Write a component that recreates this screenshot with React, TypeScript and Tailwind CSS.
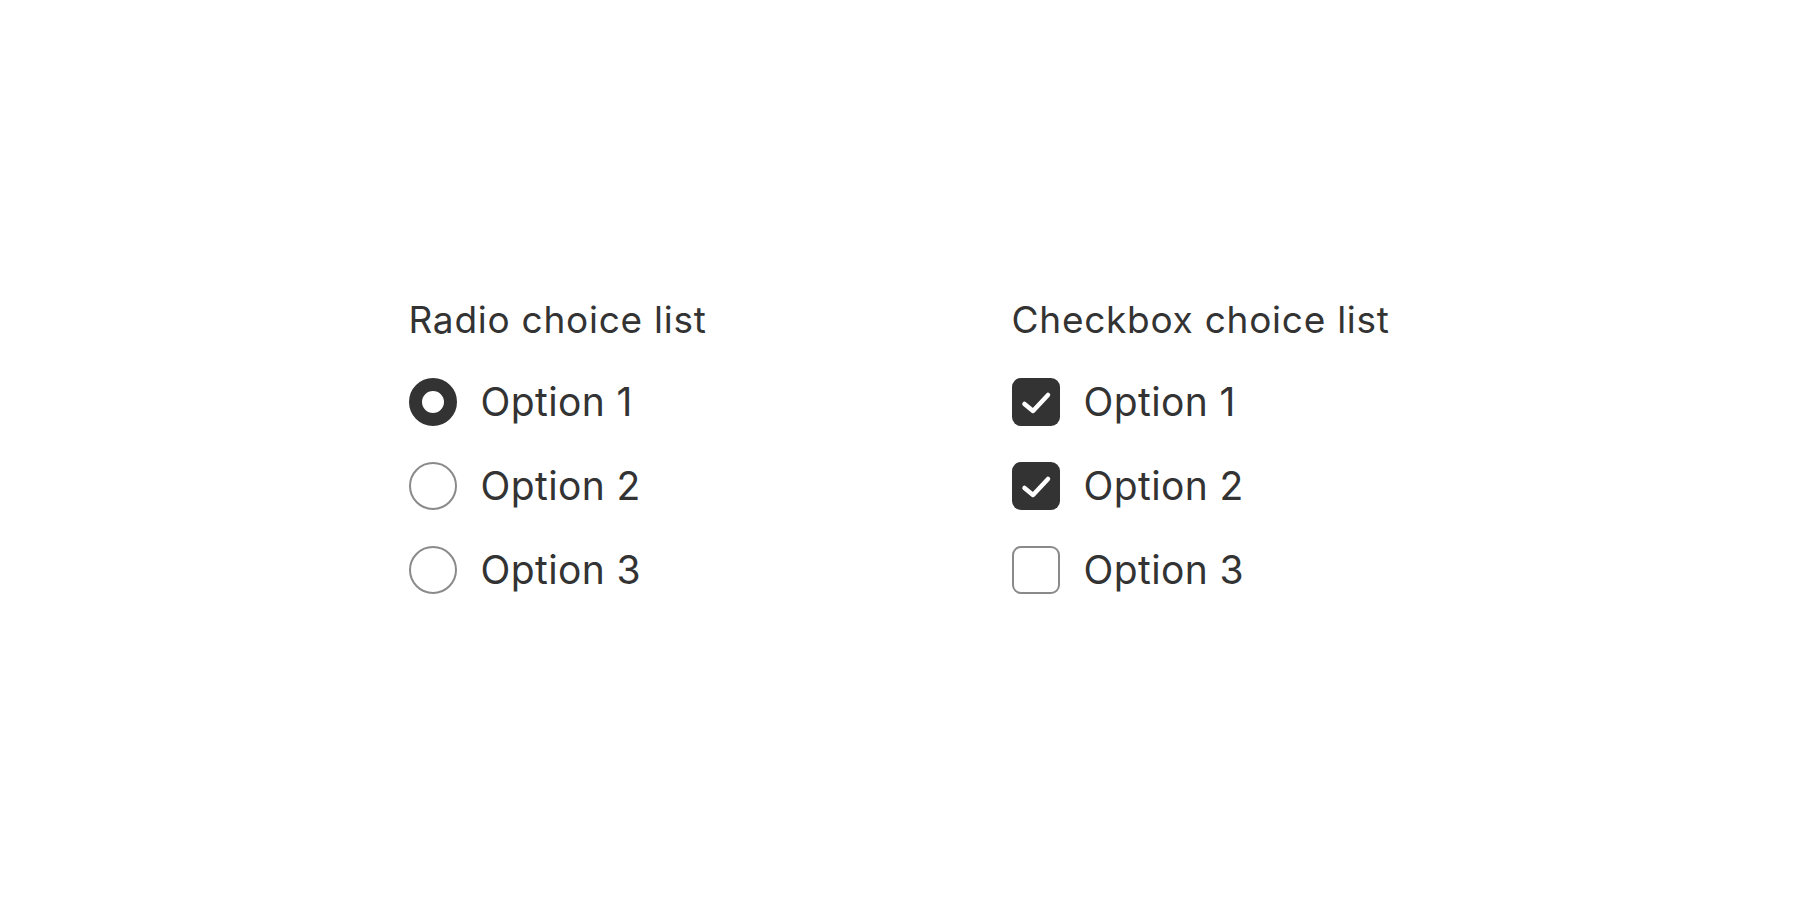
const radios = [
  { label: "Option 1", checked: true },
  { label: "Option 2", checked: false },
  { label: "Option 3", checked: false },
];

const boxes = [
  { label: "Option 1", checked: true },
  { label: "Option 2", checked: true },
  { label: "Option 3", checked: false },
];

function Radio({ checked }: { checked: boolean }) {
  return (
    <span
      className={
        checked
          ? "w-12 h-12 rounded-full border-[13px] border-[#333333] bg-white"
          : "w-12 h-12 rounded-full border-2 border-[#8a8a8a] bg-white"
      }
    />
  );
}

function Checkbox({ checked }: { checked: boolean }) {
  if (!checked) {
    return <span className="w-12 h-12 rounded-[9px] border-2 border-[#8a8a8a] bg-white" />;
  }
  return (
    <span className="w-12 h-12 rounded-[9px] bg-[#333333] flex items-center justify-center">
      <svg width="48" height="48" viewBox="0 0 48 48" fill="none">
        <path
          d="M12.5 26l8.5 7 15-16"
          stroke="white"
          strokeWidth="4.5"
          strokeLinecap="round"
          strokeLinejoin="round"
        />
      </svg>
    </span>
  );
}

export default function App() {
  return (
    <div className="min-h-screen bg-white text-[#333333] font-['Inter',sans-serif]">
      <div className="flex justify-center pt-[298px]">
        <div className="w-[603px] flex flex-col gap-9">
          <h2 className="text-[37px] leading-[44px] font-normal tracking-[0.02em]">Radio choice list</h2>
          {radios.map((r) => (
            <label key={r.label} className="flex items-center gap-6 h-12">
              <Radio checked={r.checked} />
              <span className="text-[39px] leading-[48px] tracking-[0.01em]">{r.label}</span>
            </label>
          ))}
        </div>
        <div className="w-[380px] flex flex-col gap-9">
          <h2 className="text-[37px] leading-[44px] font-normal tracking-[0.02em] whitespace-nowrap">Checkbox choice list</h2>
          {boxes.map((b) => (
            <label key={b.label} className="flex items-center gap-6 h-12">
              <Checkbox checked={b.checked} />
              <span className="text-[39px] leading-[48px] tracking-[0.01em]">{b.label}</span>
            </label>
          ))}
        </div>
      </div>
    </div>
  );
}
